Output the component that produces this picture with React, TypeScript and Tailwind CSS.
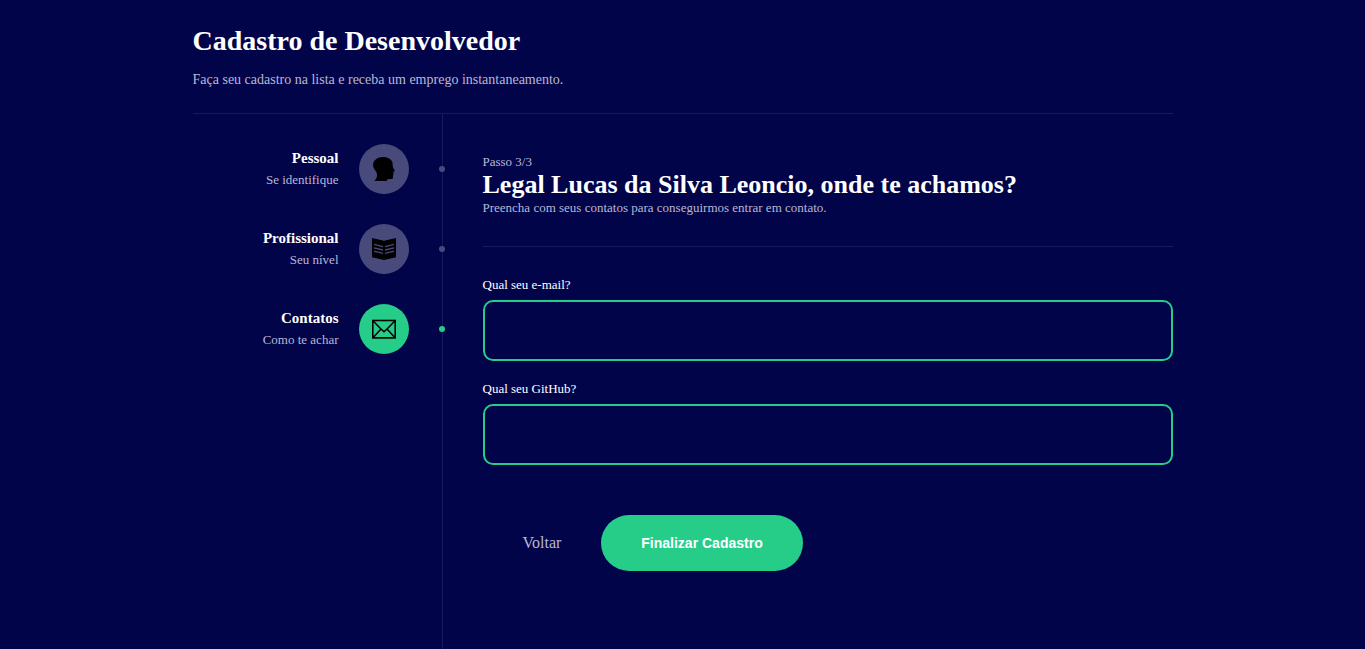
import type { ReactNode } from "react";

type Step = {
  title: string;
  description: string;
  icon: ReactNode;
  active: boolean;
};

function ProfileIcon() {
  return (
    <svg viewBox="0 0 24 24" className="size-6" fill="#000" aria-hidden="true">
      <path d="M10.8 0C15.2 0 18.8 1.8 20.2 4.8C20.9 6.4 20.5 8 20.8 9.6C20.9 10.6 21.4 11.4 22.7 13.2C22.9 13.9 22.4 14.3 21.4 14.6L21.7 16.2L21.2 17L21.5 17.8L20.9 18.6C21.2 20 21.1 21.4 20.4 21.7C18.8 22 16.4 21.6 15.2 22.6L14.6 24H2.2C3.9 22.1 5.1 20.4 5.1 18.2C5.1 16 3.8 14.6 2.8 12.8C1.6 11 1 9.6 1.1 7.6C1.4 3.2 5.4 0 10.8 0Z" />
    </svg>
  );
}

function BookIcon() {
  return (
    <svg viewBox="0 0 24 24" className="size-6" aria-hidden="true">
      <path fill="#000" d="M0 1L12 3.8L24 1V20.2L12 23L0 20.2Z" />
      <g stroke="#494a7c" strokeWidth="1.3" fill="none">
        <path d="M2 7.4L11 9.6M2 10.8L11 13M2 14.2L11 16.4" />
        <path d="M22 7.4L13 9.6M22 10.8L13 13M22 14.2L13 16.4" />
      </g>
    </svg>
  );
}

function MailIcon() {
  return (
    <svg viewBox="0 0 24 24" className="size-6" fill="none" stroke="#000" aria-hidden="true">
      <rect x="0.8" y="3.5" width="22.4" height="17.4" strokeWidth="1.6" />
      <path d="M1.2 4L9.4 12.4L12 14.8L14.6 12.4L22.8 4M1.2 20.4L9 12M22.8 20.4L15 12" strokeWidth="1.5" />
    </svg>
  );
}

const steps: Step[] = [
  { title: "Pessoal", description: "Se identifique", icon: <ProfileIcon />, active: false },
  { title: "Profissional", description: "Seu nível", icon: <BookIcon />, active: false },
  { title: "Contatos", description: "Como te achar", icon: <MailIcon />, active: true },
];

function SidebarItem({ title, description, icon, active }: Step) {
  return (
    <a href="#" className="relative flex items-center" aria-current={active ? "step" : undefined}>
      <div className="mr-5 flex-1 text-right">
        <div className="mb-1.5 text-[15px] leading-4 font-bold text-white">{title}</div>
        <div className="text-[13px] leading-4 text-[#b8b8d4]">{description}</div>
      </div>
      <div
        className={`flex size-[50px] items-center justify-center rounded-full ${
          active ? "bg-[#25cd89]" : "bg-[#494a7c]"
        }`}
      >
        {icon}
      </div>
      <span
        className={`absolute -right-9 size-1.5 rounded-full ${active ? "bg-[#25cd89]" : "bg-[#494a7c]"}`}
      />
    </a>
  );
}

function Field({ id, label, type }: { id: string; label: string; type: string }) {
  return (
    <div className="mb-5">
      <label htmlFor={id} className="block text-[13px] leading-4 text-white">
        {label}
      </label>
      <input
        id={id}
        type={type}
        className="mt-[7px] block h-[61px] w-full rounded-[10px] border-2 border-[#25cd89] bg-[#02044a] px-5 text-[15px] text-white outline-none"
      />
    </div>
  );
}

export default function App() {
  return (
    <div className="min-h-screen bg-[#02044a] font-['Liberation_Serif',serif] text-white">
      <div className="mx-auto flex min-h-screen max-w-[980px] flex-col">
        <header className="border-b border-[#16195c] py-[25px]">
          <h1 className="text-[28px] leading-8 font-bold">Cadastro de Desenvolvedor</h1>
          <p className="mt-[15px] text-[14px] leading-4 text-[#b8b8d4]">
            Faça seu cadastro na lista e receba um emprego instantaneamento.
          </p>
        </header>

        <div className="flex flex-1">
          <nav
            aria-label="Etapas"
            className="flex w-[250px] shrink-0 flex-col gap-[30px] border-r border-[#16195c] pt-[30px] pr-[33px]"
          >
            {steps.map((step) => (
              <SidebarItem key={step.title} {...step} />
            ))}
          </nav>

          <main className="flex-1 pt-10 pl-10">
            <p className="text-[13px] leading-4 text-[#b8b8d4]">Passo 3/3</p>
            <h2 className="text-[26px] leading-[30px] font-bold">
              Legal Lucas da Silva Leoncio, onde te achamos?
            </h2>
            <p className="text-[13px] leading-4 text-[#b8b8d4]">
              Preencha com seus contatos para conseguirmos entrar em contato.
            </p>
            <hr className="my-[30px] border-[#16195c]" />

            <form onSubmit={(event) => event.preventDefault()}>
              <Field id="email" label="Qual seu e-mail?" type="email" />
              <Field id="github" label="Qual seu GitHub?" type="url" />

              <div className="mt-[50px] flex items-center">
                <a href="#" className="px-10 py-5 text-[16px] leading-4 text-[#b8b8d4]">
                  Voltar
                </a>
                <button
                  type="submit"
                  className="h-14 cursor-pointer rounded-full bg-[#25cd89] px-10 font-['Liberation_Sans',sans-serif] text-[14px] font-bold text-white"
                >
                  Finalizar Cadastro
                </button>
              </div>
            </form>
          </main>
        </div>
      </div>
    </div>
  );
}
